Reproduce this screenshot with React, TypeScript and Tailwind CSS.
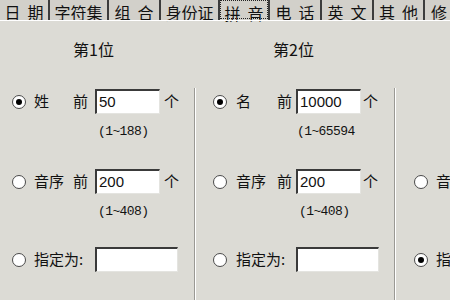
const tabs = [
  { label: "日 期", w: "w-[50px]" },
  { label: "字符集", w: "w-[59px]" },
  { label: "组 合", w: "w-[52px]" },
  { label: "身份证", w: "w-[59px]" },
  { label: "拼 音", w: "w-[50px]", active: true },
  { label: "电 话", w: "w-[52px]" },
  { label: "英 文", w: "w-[52px]" },
  { label: "其 他", w: "w-[51px]" },
];

const Radio = ({ on }: { on?: boolean }) => (
  <div className="flex h-[14px] w-[14px] shrink-0 items-center justify-center rounded-full border-[1.5px] border-[#4a4a4a] bg-white">
    {on && <div className="h-[6px] w-[6px] rounded-full bg-black" />}
  </div>
);

const Field = ({ value, w }: { value: string; w: string }) => (
  <div
    className={`${w} flex h-[25px] shrink-0 items-center border-t-2 border-l-2 border-r border-b border-t-[#3a3a3a] border-l-[#3a3a3a] border-r-[#e4e4e0] border-b-[#e4e4e0] bg-white pl-[2px] font-['Liberation_Sans'] text-[15px] leading-[18px]`}
  >
    {value}
  </div>
);

const Hint = ({ text }: { text: string }) => (
  <div className="mt-[10px] whitespace-nowrap font-['Liberation_Mono'] text-[13px] leading-[15px] tracking-[-0.6px]">
    {text}
  </div>
);

export default function App() {
  return (
    <div className="h-[300px] w-[450px] overflow-hidden bg-[#dcdbd5] font-['Noto_Sans_CJK_SC',sans-serif] text-[#111]">
      {/* tab strip */}
      <div className="flex h-[20px] bg-[#d2d0ca]">
        {tabs.map((t) => (
          <div
            key={t.label}
            className={`${t.w} flex shrink-0 items-start justify-center border-r-2 border-r-[#3c3c3c] text-[16px] leading-normal`}
          >
            <span
              className={
                t.active
                  ? "h-[19px] whitespace-pre border border-dotted border-[#222] px-[3px] leading-[24px]"
                  : "whitespace-pre"
              }
            >
              {t.label.replace(" ", "  ")}
            </span>
          </div>
        ))}
        <div className="min-w-0 flex-1 pl-[6px] text-[16px] leading-normal">修</div>
      </div>
      <div className="relative h-px bg-white" />

      {/* headings */}
      <div className="flex h-[67px] text-[16px]">
        <div className="w-[195px] pl-[73px] pt-[16px]">第1位</div>
        <div className="w-[200px] pl-[78px] pt-[16px]">第2位</div>
      </div>

      {/* columns */}
      <div className="flex">
        {/* column 1 */}
        <div className="w-[195px] shrink-0 border-r border-r-[#9a9994] text-[15px]">
          <div className="h-[80px] pl-[12px] pt-[1px]">
            <div className="flex h-[25px] items-center">
              <Radio on />
              <span className="ml-[8px] w-[39px]">姓</span>
              <span className="w-[22px]">前</span>
              <Field value="50" w="w-[65px]" />
              <span className="ml-[4px]">个</span>
            </div>
            <div className="pl-[86px]"><Hint text="(1~188)" /></div>
          </div>
          <div className="h-[79px] pl-[12px] pt-[1px]">
            <div className="flex h-[25px] items-center">
              <Radio />
              <span className="ml-[8px] w-[39px]">音序</span>
              <span className="w-[22px]">前</span>
              <Field value="200" w="w-[65px]" />
              <span className="ml-[4px]">个</span>
            </div>
            <div className="pl-[86px]"><Hint text="(1~408)" /></div>
          </div>
          <div className="h-[53px] pl-[12px]">
            <div className="flex h-[25px] items-center">
              <Radio />
              <span className="ml-[8px] w-[61px]">指定为:</span>
              <Field value="" w="w-[83px]" />
            </div>
          </div>
        </div>

        {/* column 2 */}
        <div className="w-[200px] shrink-0 border-l border-l-white border-r border-r-[#9a9994] text-[15px]">
          <div className="h-[80px] pl-[17px] pt-[1px]">
            <div className="flex h-[25px] items-center">
              <Radio on />
              <span className="ml-[9px] w-[41px]">名</span>
              <span className="w-[19px]">前</span>
              <Field value="10000" w="w-[65px]" />
              <span className="ml-[2px]">个</span>
            </div>
            <div className="pl-[84px]"><Hint text="(1~65594" /></div>
          </div>
          <div className="h-[79px] pl-[17px] pt-[1px]">
            <div className="flex h-[25px] items-center">
              <Radio />
              <span className="ml-[9px] w-[41px]">音序</span>
              <span className="w-[19px]">前</span>
              <Field value="200" w="w-[65px]" />
              <span className="ml-[2px]">个</span>
            </div>
            <div className="pl-[86px]"><Hint text="(1~408)" /></div>
          </div>
          <div className="h-[53px] pl-[17px]">
            <div className="flex h-[25px] items-center">
              <Radio />
              <span className="ml-[9px] w-[60px]">指定为:</span>
              <Field value="" w="w-[83px]" />
            </div>
          </div>
        </div>

        {/* column 3 */}
        <div className="min-w-0 flex-1 border-l border-l-white text-[15px]">
          <div className="h-[80px]" />
          <div className="h-[79px] pl-[18px] pt-[1px]">
            <div className="flex h-[25px] items-center whitespace-nowrap">
              <Radio />
              <span className="ml-[8px]">音序</span>
            </div>
          </div>
          <div className="h-[53px] pl-[18px]">
            <div className="flex h-[25px] items-center whitespace-nowrap">
              <Radio on />
              <span className="ml-[8px]">指定为:</span>
            </div>
          </div>
        </div>
      </div>
    </div>
  );
}
